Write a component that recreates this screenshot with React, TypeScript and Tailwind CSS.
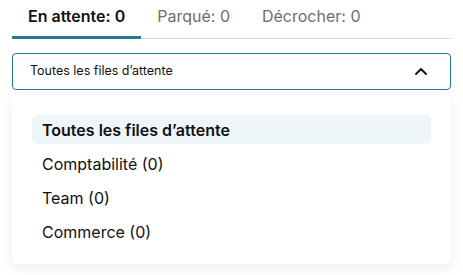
import React from "react";

const tabs = [
  { label: "En attente: 0", active: true },
  { label: "Parqué: 0", active: false },
  { label: "Décrocher: 0", active: false },
];

const queues = ["Comptabilité (0)", "Team (0)", "Commerce (0)"];

const App: React.FC = () => {
  return (
    <div className="w-[463px] h-[275px] bg-white px-3 font-['Inter',sans-serif] text-[#111]">
      <div className="flex border-b border-[#d5d9de]">
        {tabs.map((t) => (
          <div
            key={t.label}
            className={
              t.active
                ? "px-4 pt-1 pb-2 text-[16px] leading-6 font-semibold text-[#111] border-b-[3px] border-[#1f7c8f] -mb-px"
                : "px-4 pt-1 pb-2 text-[16px] leading-6 text-[#6e6e6e]"
            }
          >
            {t.label}
          </div>
        ))}
      </div>
      <div className="mt-[14px] h-[37px] flex items-center justify-between border border-[#1f7c8f] rounded-[4px] pl-[17px] pr-[23px] text-[12.5px]">
        <span>Toutes les files d’attente</span>
        <svg width="12" height="7" viewBox="0 0 12 7" fill="none" stroke="#111" strokeWidth="1.9" strokeLinecap="round" strokeLinejoin="round">
          <path d="M1 6L6 1l5 5" />
        </svg>
      </div>
      <div className="mt-[5px] bg-white rounded-[6px] shadow-[0_4px_14px_rgba(0,0,0,0.08)] px-5 pt-5 pb-[18px] flex flex-col gap-[5px] text-[16px]">
        <div className="h-[29px] flex items-center px-[10px] rounded-[5px] bg-[#eef6f9] font-semibold">
          Toutes les files d’attente
        </div>
        {queues.map((q) => (
          <div key={q} className="h-[29px] flex items-center px-[10px]">
            {q}
          </div>
        ))}
      </div>
    </div>
  );
};

export default App;
